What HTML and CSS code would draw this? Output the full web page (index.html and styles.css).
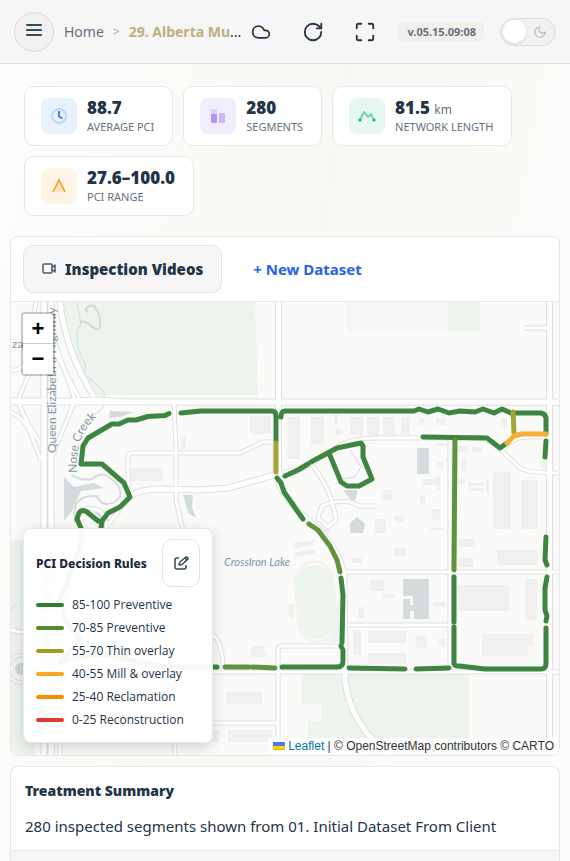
FILE: index.html
```html
<!DOCTYPE html>
<html lang="en">
<head>
  <meta charset="UTF-8" />
  <meta name="viewport" content="width=device-width, initial-scale=1.0" />
  <title>Pavement Condition</title>
  <link rel="stylesheet" href="styles.css">
</head>
<body>
  <header class="topbar">
    <button type="button" class="menu-btn" aria-label="Menu">
      <svg width="16" height="14" viewBox="0 0 16 14"><path d="M1 2h14M1 7h14M1 12h14" /></svg>
    </button>
    <nav class="breadcrumb" aria-label="Breadcrumb">
      <a href="#" class="crumb-home">Home</a>
      <span class="crumb-sep">&gt;</span>
      <span class="crumb-current"><a href="#">29. Alberta Mu</a>...</span>
    </nav>
    <div class="actions">
      <button type="button" class="icon-btn" aria-label="Cloud sync">
        <svg width="20" height="20" viewBox="0 0 24 24"><path d="M17.5 19H9a7 7 0 1 1 6.71-9h1.79a4.5 4.5 0 1 1 0 9Z" /></svg>
      </button>
      <button type="button" class="icon-btn" aria-label="Refresh">
        <svg width="22" height="22" viewBox="0 0 24 24"><path d="M21 12a9 9 0 1 1-9-9c2.52 0 4.93 1 6.74 2.74L21 8" /><path d="M21 3v5h-5" /></svg>
      </button>
      <button type="button" class="icon-btn" aria-label="Full screen">
        <svg width="22" height="22" viewBox="0 0 24 24"><path d="M8 3H5a2 2 0 0 0-2 2v3M21 8V5a2 2 0 0 0-2-2h-3M3 16v3a2 2 0 0 0 2 2h3M16 21h3a2 2 0 0 0 2-2v-3" /></svg>
      </button>
    </div>
    <span class="version">v.05.15.09:08</span>
    <button type="button" class="theme-toggle" aria-label="Toggle dark mode">
      <span class="knob"></span>
      <svg width="14" height="14" viewBox="0 0 24 24"><path d="M12 3a6 6 0 0 0 9 9 9 9 0 1 1-9-9Z" /></svg>
    </button>
  </header>

  <main class="page">
    <section class="stats" aria-label="Key figures">
      <div class="stat">
        <span class="stat-icon blue">
          <svg width="18" height="18" viewBox="0 0 18 18"><circle cx="9" cy="9" r="7" fill="none" stroke="#bfd7fd" stroke-width="2" /><path d="M9 4V9.500l3.500 2" fill="none" stroke="#3b82f6" stroke-width="2" /></svg>
        </span>
        <div>
          <div class="stat-value">88.7</div>
          <div class="stat-label">AVERAGE PCI</div>
        </div>
      </div>
      <div class="stat">
        <span class="stat-icon purple">
          <svg width="18" height="18" viewBox="0 0 18 18"><rect x="2" y="2" width="6" height="8" rx="1" fill="#ddd0fd" /><rect x="2" y="7" width="6" height="9" rx="1" fill="#b294f8" /><rect x="10" y="6" width="6" height="10" rx="1" fill="#cbb6fb" /></svg>
        </span>
        <div>
          <div class="stat-value">280</div>
          <div class="stat-label">SEGMENTS</div>
        </div>
      </div>
      <div class="stat">
        <span class="stat-icon green">
          <svg width="18" height="18" viewBox="0 0 18 18"><path d="M2 13l4-8 4 5 3-3 3 6" fill="none" stroke="#6fd6b2" stroke-width="2" stroke-linejoin="round" /><circle cx="2" cy="13" r="1.600" fill="#10b981" /><circle cx="16" cy="13" r="1.600" fill="#10b981" /></svg>
        </span>
        <div>
          <div class="stat-value">81.5 <small>km</small></div>
          <div class="stat-label">NETWORK LENGTH</div>
        </div>
      </div>
      <div class="stat">
        <span class="stat-icon amber">
          <svg width="18" height="18" viewBox="0 0 18 18"><path d="M3 15L9 3l6 12z" fill="#fde5c0" /><path d="M3 15L9 3l6 12" fill="none" stroke="#f59e0b" stroke-width="1.500" /></svg>
        </span>
        <div>
          <div class="stat-value">27.6–100.0</div>
          <div class="stat-label">PCI RANGE</div>
        </div>
      </div>
    </section>

    <section class="card map-card">
      <div class="tabs">
        <button type="button" class="tab active">
          <svg width="16" height="16" viewBox="0 0 16 16"><rect x="1" y="3" width="9" height="9" rx="1" /><path d="M10 6.500l3-2.500v7l-3-2.500" /></svg>
          Inspection Videos
        </button>
        <button type="button" class="tab add">+ New Dataset</button>
      </div>

      <div class="map">
        <svg class="map-tiles" viewBox="11 302 548 453" preserveAspectRatio="xMidYMid slice" role="img" aria-label="Road segment map">
          <defs>
            <path id="creek" d="M77 473 C76 450 80 432 96 418" />
            <g id="roads">
              <path d="M11 400H75L100 399 140 402 200 403H560" />
              <path d="M174 404L176 450V500L184 535 195 545" />
              <path d="M128 490V457Q128 453 132 453H240L263 442H275" />
              <path d="M11 370Q26 372 27 350L36 302M54 340L75 400 53 455M54 350L80 400M11 412Q24 418 30 432L41 460M30 372Q22 390 18 400Q22 415 38 440" />
              <path d="M275 441V475" />
              <path d="M300 470Q320 460 335 448 350 438 375 438H480Q490 440 503 452L520 468Q528 473 560 473" />
              <path d="M503 450Q512 436 530 437H547" />
              <path d="M450 440V671" />
              <path d="M345 572H560M345 625H450" />
              <path d="M213 672H560M213 723H278M278 755V650Q278 646 282 646H341" />
              <path d="M213 635Q223 642 223 671" />
              <path d="M313 466Q332 490 336 520L328 527 318 518 322 506Q335 500 350 502L360 506H377" />
              <path d="M60 755V600M175 755V650M80 510Q120 500 100 560L60 600M11 630Q40 640 60 600" />
              <path d="M130 497L108 525M524 328H547" />
            </g>
            <g id="arterials">
              <path d="M44 302V755M51 302V755M60 302Q65 350 94 397" />
              <path d="M278.500 302V475M549.500 302V755" />
              <path d="M130 497Q136 490 160 489L200 490 228 488 275 475 300 470" />
              <path d="M278 480Q283 498 308 520Q338 545 344 575L345 680Q350 725 390 755" />
            </g>
          </defs>

          <rect x="11" y="302" width="548" height="453" fill="#fafaf8" />

          <!-- parks -->
          <g fill="#edf3ed">
            <path d="M61 302H255L258 395H97Q70 370 61 302z" />
            <path d="M449 302H480V331H449zM302 674H469V755H308V721H321V704H302z" />
            <path d="M11 540h24v215H11z" />
            <rect x="298" y="565" width="36" height="74" rx="18" transform="rotate(-5 316 602)" />
            <path d="M338 600h8v42h-16zM541 455h6v14h-6z" />
          </g>
          <rect x="297" y="562" width="38" height="80" rx="19" transform="rotate(-5 316 602)" fill="none" stroke="#f2f2f1" stroke-width="3" />

          <!-- buildings -->
          <g fill="#f0f0ef">
            <path d="M347 302H449V331H347z" fill="#f5f5f4" />
            <path d="M250 416h21v18h-21zM287 417h13v42h-13zM311 417h13v27h-13zM334 414h4v10h-4zM335 429h6v6h-6zM350 417h13v18h-13zM367 417h12v18h-12zM383 417h12v18h-12zM401 417h9v18h-9zM419 418h5v7h-5zM436 418h10v7h-10zM501 418h6v9h-6z" />
            <path d="M131 468h32v13h-32zM181 437h5v12h-5zM436 443h10v3h-10zM458 446h10v6h-10zM472 447h10v5h-10zM461 459h6v12h-6zM437 462h6v5h-6zM423 479h14v6h-14zM437 477h3v13h-3zM458 478h7v6h-7zM468 483h16v3h-16zM468 488h16v3h-16zM486 479h3v13h-3z" />
            <path d="M493 472h18v57h-18zM521 480h17v49h-17zM382 490h10v10h-10zM420 496h5v7h-5zM432 509h8v11h-8zM394 516h10v6h-10zM430 528h14v2h-14zM375 519h11v14h-11z" />
            <path d="M293 543l21-3v5l-21 3zM295 552l20-3v5l-20 3zM352 558h10v5h-10zM370 580h14v11h-14zM358 607h6v11h-6zM353 630h8v25h-8zM368 631h38v12h-38zM368 653h38v11h-38zM416 636h11v12h-11zM438 639h8v7h-8z" />
            <path d="M458 585h51v26h-51zM525 579h12v41h-12zM482 634h52v12h-6v10h-46zM497 550h41v15h-41zM458 539h17v8h-17zM458 558h15v9h-15zM394 548h12v8h-12zM383 594h12v4h-12zM494 520h16v8h-16zM521 520h17v9h-17zM433 602h13v5h-13z" />
            <path d="M251 646h12l4 11h-16zM226 692h36v12h-36zM228 730h44v12h-44zM213 730h6v12h-6zM289 604h5v14h-5zM322 524h8v9h-8zM180 730h30v12h-30z" />
          </g>

          <!-- water -->
          <g fill="#d5dadd">
            <path d="M110 411l23 1-12 5-12 1zM417 448h12v26h-12zM343 490h14v6l-4 7zM350 523l7-6 8 7-2 9h-13zM183 495h10l-1 12 4 11-8-5z" />
            <path d="M64 477l10 10 20-4 10 5-8 1-15 2-9 20-8 10zM94 512h12l-4 8zM403 579h26v40h-15v-8h-4v8h-7v-20h7v6h3v-9h-10z" />
          </g>
          <g fill="none" stroke="#d5dadf" stroke-width="2">
            <path d="M77 302l4 22-4 7 1 17 7 16v12l9 6 10 10v12q-2 8-13 12" stroke-width="1" />
            <path d="M80 321l8 2q14 14 12-3-2-12-8-15-10 4-4 7" />
            <path d="M72 475q8 6 20 4 10-8 17-2 14 10 11 20-8 10-18 6l-6-7q-14 0-17 5-6 4-4 22" />
            <path d="M351 451l10 16-6 10-12 2M11 610l6-7" stroke-width="1" />
          </g>

          <!-- road casings, then road fills -->
          <g fill="none" stroke="#e0e0df" stroke-width="5"><use href="#roads" /></g>
          <g fill="none" stroke="#e0e0df" stroke-width="7"><use href="#arterials" /><path d="M11 402H560" /></g>
          <g fill="none" stroke="#ffffff" stroke-width="3"><use href="#roads" /></g>
          <g fill="none" stroke="#ffffff" stroke-width="5"><use href="#arterials" /><path d="M11 402H560" /></g>
          <g fill="none" stroke="#dededd"><circle cx="22" cy="669" r="12" /><circle cx="22" cy="669" r="16" /><path d="M47.500 302V755" /></g>
          <circle cx="21" cy="669" r="6" fill="#cfd5d9" />

          <!-- place names -->
          <g class="place">
            <text transform="translate(56 453) rotate(-90)">Queen Elizabeth II Highway</text>
            <text transform="translate(50 709) rotate(-90)">Queen Elizabeth II Highway</text>
            <text><textPath href="#creek">Nose Creek</textPath></text>
            <text x="12" y="348">za</text>
            <text x="224" y="566" class="lake">CrossIron Lake</text>
          </g>

          <!-- inspected segments -->
          <g class="segments">
            <path class="pci-85" d="M169 413.500L165 415.500 148 416.500 136 420H128L119 424H112L88 438 83 446 81 464H102L124 483 130 497 120 507 108 513 102 521 101 528M102 522L98 521 87 512Q82 509 79 513L77 519 81 528 82 540 70 575 60 600 65 620 80 640 60 662Q95 650 125 659L165 667H217" />
            <path class="pci-85" d="M181 413L201 411H272Q276 411 276 416V441M281 417Q281 411 285 411H414L419 409 428 412 438 409 449 413 460 411 475 412 483 409 494 413 502 409 511 413H541Q546 414 546 419V434M546 441L545 457" />
            <path class="pci-85" d="M423 437L487 438 500 448 507 443M285 476L298 470 308 464M311 462L337 448 361 443 363 446V457L372 479 359 486H347L341 482 329 453M277 478L281 483 284 492 303 519" />
            <path class="pci-85" d="M341 578L343 595 342 643M341 646L343 650V661Q343 667 337 667H282M349 668L405 669M416 669L449 668M454 577V622M454 627V663Q454 666 459 666L485 669H541Q546 669 546 663V628M546 537L545 560 547 565M547 577L545 588V610L547 616 546 621" />
            <path class="pci-70" d="M309 524L318 530 330 546 337 560 340 572M455 440L454 570M225 667H249M252 667L275 668" />
            <path class="pci-55" d="M276 443V472M513 412L514 433" />
            <path class="pci-40" d="M507 443L514 436 521 434H546" />
          </g>
        </svg>

        <div class="zoom-control">
          <button type="button" aria-label="Zoom in">+</button>
          <button type="button" aria-label="Zoom out">−</button>
        </div>

        <div class="legend">
          <div class="legend-head">
            <h2>PCI Decision Rules</h2>
            <button type="button" class="edit-btn" aria-label="Edit rules">
              <svg width="16" height="16" viewBox="0 0 16 16"><path d="M6 3H4a2 2 0 0 0-2 2v7a2 2 0 0 0 2 2h7a2 2 0 0 0 2-2v-2M6 10l1-3 6-5q2 0 2 2L9 9.500zM12 3l2 2" /></svg>
            </button>
          </div>
          <ul>
            <li><span class="swatch sw-85"></span>85-100 Preventive</li>
            <li><span class="swatch sw-70"></span>70-85 Preventive</li>
            <li><span class="swatch sw-55"></span>55-70 Thin overlay</li>
            <li><span class="swatch sw-40"></span>40-55 Mill &amp; overlay</li>
            <li><span class="swatch sw-25"></span>25-40 Reclamation</li>
            <li><span class="swatch sw-0"></span>0-25 Reconstruction</li>
          </ul>
        </div>

        <div class="attribution">
          <svg width="12" height="8" viewBox="0 0 12 8"><path fill="#4c7be1" d="M0 0h12v4H0z" /><path fill="#ffd500" d="M0 4h12v3H0z" /><path fill="#e0bc00" d="M0 7h12v1H0z" /></svg>
          <a href="#">Leaflet</a> | © OpenStreetMap contributors © CARTO
        </div>
      </div>
    </section>

    <section class="card summary">
      <div class="summary-head">
        <h2>Treatment Summary</h2>
        <p>280 inspected segments shown from 01. Initial Dataset From Client</p>
      </div>
      <div class="summary-body"></div>
    </section>
  </main>
</body>
</html>
```
FILE: styles.css
```css
* {
  box-sizing: border-box;
}

body {
  font-family: "Noto Sans", "Open Sans", sans-serif;
  margin: 0;
  min-height: 100vh;
  display: flex;
  flex-direction: column;
  color: #243447;
  background: linear-gradient(100deg, #fdfdfc, #f8f8f4 50%, #fcfcfb);
}

button {
  font-family: inherit;
  cursor: pointer;
}

h2,
p,
ul {
  margin: 0;
}

a {
  text-decoration: none;
}

/* top bar */
.topbar {
  display: flex;
  align-items: center;
  height: 64px;
  padding: 0 14px;
  background: #f6f6f6;
  border-bottom: 1px solid #e0e1e3;
}

.topbar svg {
  fill: none;
  stroke: #243447;
  stroke-width: 2;
  stroke-linecap: round;
  stroke-linejoin: round;
}

.menu-btn {
  flex: none;
  width: 40px;
  height: 40px;
  padding: 0 0 4px;
  display: grid;
  place-items: center;
  border: 1px solid #dcdcdc;
  border-radius: 50%;
  background: #f1f1f1;
}

.topbar .menu-btn svg {
  stroke: #344a59;
}

.breadcrumb {
  flex: 1;
  min-width: 0;
  display: flex;
  align-items: center;
  gap: 9px;
  padding-left: 10px;
  font-size: 14px;
  white-space: nowrap;
}

.crumb-home {
  color: #64717f;
}

.crumb-sep {
  color: #a0a7af;
  font-size: 12px;
}

.crumb-current a {
  color: #bfae84;
  font-weight: 700;
}

.actions {
  display: flex;
  gap: 8px;
}

.icon-btn {
  width: 44px;
  height: 44px;
  padding: 0;
  display: grid;
  place-items: center;
  border: none;
  background: none;
}

.version {
  margin: 0 16px 0 12px;
  padding: 0 8px;
  line-height: 19px;
  font-size: 11px;
  font-weight: 700;
  color: #64717f;
  background: #f0efeb;
  border-radius: 4px;
}

.theme-toggle {
  flex: none;
  width: 56px;
  height: 28px;
  padding: 0 8px 0 2px;
  display: flex;
  align-items: center;
  justify-content: space-between;
  border: 1px solid #dedede;
  border-radius: 14px;
  background: #f1f1f1;
}

.topbar .theme-toggle svg {
  stroke: #b3b8bf;
}

.knob {
  width: 23px;
  height: 23px;
  border-radius: 50%;
  background: #fff;
  box-shadow: 0 1px 3px rgba(0, 0, 0, 0.12);
}

/* key figures */
.page {
  flex: 1;
  display: flex;
  flex-direction: column;
  padding: 0 10px;
}

.stats {
  display: flex;
  flex-wrap: wrap;
  gap: 10px;
  padding: 22px 14px 20px;
}

.stat {
  display: flex;
  align-items: center;
  gap: 10px;
  height: 60px;
  padding: 0 18px 0 16px;
  background: #fff;
  border: 1px solid #e6e8eb;
  border-radius: 10px;
}

.stat-icon {
  width: 36px;
  height: 36px;
  display: grid;
  place-items: center;
  border-radius: 8px;
}

.blue {
  background: #eaf1fe;
}

.purple {
  background: #f2edfe;
}

.green {
  background: #e6f7f1;
}

.amber {
  background: #fef4e6;
}

.stat-value {
  height: 22px;
  font-size: 17px;
  font-weight: 900;
  line-height: 22px;
}

.stat-value small {
  font-size: 12px;
  font-weight: 400;
  color: #64717f;
}

.stat-label {
  font-size: 11px;
  line-height: 16px;
  color: #64717f;
}

/* map */
.card {
  background: #fff;
  border: 1px solid #e6e8eb;
  border-radius: 8px;
  overflow: hidden;
}

.tabs {
  display: flex;
  gap: 12px;
  padding: 8px 12px;
  border-bottom: 1px solid #e6e8eb;
}

.tab {
  display: flex;
  align-items: center;
  gap: 7px;
  height: 48px;
  padding: 0 18px;
  font-size: 15px;
  font-weight: 700;
  color: #243447;
  background: none;
  border: 1px solid transparent;
  border-radius: 10px;
}

.tab.active {
  font-weight: 900;
  background: #f6f6f6;
  border-color: #e2e4e7;
}

.tab.add {
  color: #2563eb;
}

.tab svg {
  fill: none;
  stroke: #4a5a69;
  stroke-width: 1.5;
  stroke-linejoin: round;
}

.map {
  position: relative;
  height: 453px;
}

.map-tiles {
  display: block;
  width: 100%;
  height: 100%;
}

.place {
  font-family: Lato, sans-serif;
  font-size: 12px;
  fill: #8797a5;
}

.lake {
  font-style: italic;
  font-size: 11px;
  fill: #7c97a6;
}

.segments {
  fill: none;
  stroke-width: 5;
  stroke-linecap: round;
  stroke-linejoin: round;
  opacity: 0.92;
}

.pci-85 {
  stroke: #2e7d32;
}

.pci-70 {
  stroke: #558b2f;
}

.pci-55 {
  stroke: #9e9d24;
}

.pci-40 {
  stroke: #f9a825;
}

.zoom-control {
  position: absolute;
  top: 10px;
  left: 10px;
  display: flex;
  flex-direction: column;
  border: 2px solid rgba(0, 0, 0, 0.2);
  border-radius: 4px;
  background-clip: padding-box;
}

.zoom-control button {
  width: 30px;
  height: 30px;
  padding: 0;
  font-family: "Liberation Sans", sans-serif;
  font-size: 22px;
  font-weight: 700;
  line-height: 30px;
  color: #000;
  background: #fff;
  border: none;
}

.zoom-control button:first-child {
  border-bottom: 1px solid #ccc;
  border-radius: 2px 2px 0 0;
}

.legend {
  position: absolute;
  left: 12px;
  bottom: 12px;
  width: 190px;
  padding: 10px 12px 11px;
  background: rgba(255, 255, 255, 0.95);
  border: 1px solid #e6e8eb;
  border-radius: 8px;
  box-shadow: 0 4px 14px rgba(0, 0, 0, 0.16);
}

.legend-head {
  display: flex;
  align-items: center;
  justify-content: space-between;
  margin-bottom: 6px;
}

.legend h2 {
  font-size: 12px;
  font-weight: 800;
  color: #1d2939;
  white-space: nowrap;
}

.edit-btn {
  width: 38px;
  height: 48px;
  padding: 0;
  display: grid;
  place-items: center;
  border: 1px solid #e2e4e7;
  border-radius: 10px;
  background: #fff;
}

.edit-btn svg {
  fill: none;
  stroke: #344a59;
  stroke-width: 1.5;
  stroke-linejoin: round;
}

.legend ul {
  padding: 0;
  list-style: none;
}

.legend li {
  display: flex;
  align-items: center;
  gap: 8px;
  font-family: "Open Sans", "Noto Sans", sans-serif;
  font-size: 12px;
  line-height: 23px;
  white-space: nowrap;
}

.swatch {
  width: 28px;
  height: 4px;
  border-radius: 2px;
}

.sw-85 {
  background: #2e7d32;
}

.sw-70 {
  background: #558b2f;
}

.sw-55 {
  background: #9e9d24;
}

.sw-40 {
  background: #f9a825;
}

.sw-25 {
  background: #fb8c00;
}

.sw-0 {
  background: #e53935;
}

.attribution {
  position: absolute;
  right: 0;
  bottom: 0;
  padding: 0 5px;
  font-family: "Liberation Sans", sans-serif;
  font-size: 12px;
  line-height: 17px;
  color: #333;
  background: rgba(255, 255, 255, 0.8);
}

.attribution a {
  color: #0078a8;
}

/* treatment summary */
.summary {
  flex: 1;
  display: flex;
  flex-direction: column;
  margin-top: 10px;
  border-bottom: none;
  border-radius: 8px 8px 0 0;
}

.summary-head {
  padding: 13px 14px 12px;
  border-bottom: 1px solid #e6e8eb;
}

.summary h2 {
  font-size: 14px;
  font-weight: 900;
  line-height: 22px;
}

.summary p {
  margin-top: 12px;
  font-size: 15px;
  line-height: 24px;
}

.summary-body {
  flex: 1;
  background: #f6f6f6;
}
```
